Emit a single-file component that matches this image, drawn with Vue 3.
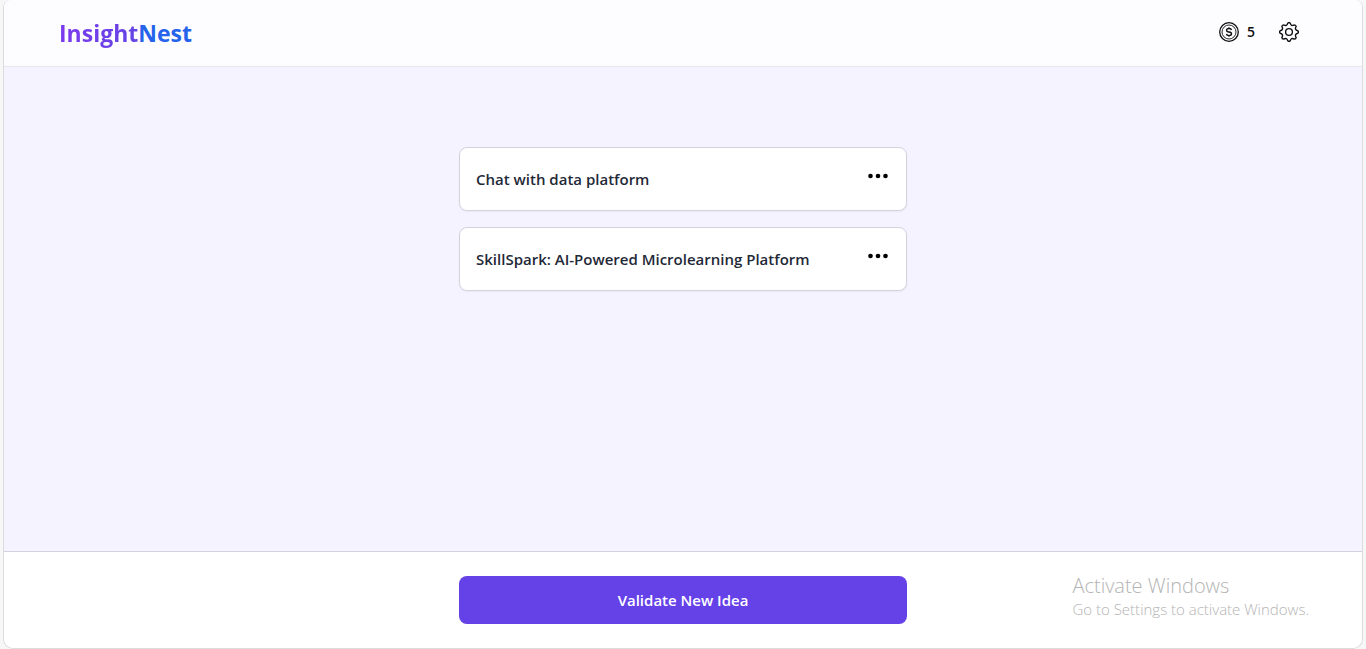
<script setup>
const ideas = [
  { id: 1, title: 'Chat with data platform' },
  { id: 2, title: 'SkillSpark: AI-Powered Microlearning Platform' },
]
const credits = 5
</script>

<template>
  <div class="page">
    <div class="panel">
      <header class="header">
        <a class="brand" href="#"><span class="brand-first">Insight</span><span class="brand-second">Nest</span></a>
        <div class="actions">
          <div class="credits">
            <svg width="20" height="20" viewBox="0 0 20 20" fill="none" stroke="#111" aria-hidden="true">
              <circle cx="10" cy="10" r="9.3" stroke-width="1.3" />
              <circle cx="10" cy="10" r="7" stroke-width="0.9" />
              <path d="M12.5 8C12.3 7 11.4 6.5 10 6.5S7.6 7.1 7.6 8.2 8.6 9.8 10 10s2.5.6 2.5 1.8-1.1 1.8-2.5 1.8S7.6 13 7.4 12M10 5.3v1.2M10 13.6v1.2" stroke-width="1.4" />
            </svg>
            <span>{{ credits }}</span>
          </div>
          <button class="icon-button" type="button" aria-label="Settings">
            <svg width="20" height="20" viewBox="0 0 20 20" fill="none" stroke="#111" stroke-width="1.4" stroke-linejoin="round" aria-hidden="true">
              <path d="M8.76 1.19Q10 0 11.24 1.19Q12.14 4.83 15.36 2.89Q17.07 2.93 17.11 4.64Q15.17 7.86 18.81 8.76Q20 10 18.81 11.24Q15.17 12.14 17.11 15.36Q17.07 17.07 15.36 17.11Q12.14 15.17 11.24 18.81Q10 20 8.76 18.81Q7.86 15.17 4.64 17.11Q2.93 17.07 2.89 15.36Q4.83 12.14 1.19 11.24Q0 10 1.19 8.76Q4.83 7.86 2.89 4.64Q2.93 2.93 4.64 2.89Q7.86 4.83 8.76 1.19Z" />
              <circle cx="10" cy="10" r="3.4" />
            </svg>
          </button>
        </div>
      </header>

      <main class="content">
        <ul class="ideas">
          <li v-for="idea in ideas" :key="idea.id" class="idea">
            <span class="idea-title">{{ idea.title }}</span>
            <button class="icon-button more" type="button" :aria-label="`Options for ${idea.title}`">
              <svg width="20" height="20" viewBox="0 0 20 20" fill="#000" aria-hidden="true">
                <circle cx="2.5" cy="10" r="2.3" />
                <circle cx="10" cy="10" r="2.3" />
                <circle cx="17.5" cy="10" r="2.3" />
              </svg>
            </button>
          </li>
        </ul>
      </main>

      <footer class="footer">
        <button class="validate" type="button">Validate New Idea</button>
      </footer>
    </div>

    <aside class="watermark">
      <p class="watermark-title">Activate Windows</p>
      <p class="watermark-text">Go to Settings to activate Windows.</p>
    </aside>
  </div>
</template>

<style>
body {
  margin: 0;
  background: #f7f7f7;
}
</style>

<style scoped>
* {
  box-sizing: border-box;
}

.page {
  height: 100vh;
  padding: 0 3px;
  font-family: "Segoe UI", "Open Sans", "Noto Sans", sans-serif;
}

.panel {
  display: flex;
  flex-direction: column;
  height: 100%;
  border: 1px solid #dcdcdf;
  border-top: 0;
  border-radius: 8px 8px 10px 10px;
  overflow: hidden;
  background: #f5f3ff;
}

.header {
  display: flex;
  align-items: center;
  justify-content: space-between;
  height: 67px;
  padding: 0 63px 2px 55px;
  border-bottom: 1px solid #e5e7eb;
  background: #fdfdff;
}

.brand {
  padding-top: 2px;
  font-size: 23px;
  line-height: 32px;
  font-weight: 700;
  text-decoration: none;
}

.brand-first {
  background: linear-gradient(to right, #7c3aed, #6344e5);
  background-clip: text;
  color: transparent;
}

.brand-second {
  color: #2563eb;
}

.actions {
  display: flex;
  align-items: center;
  gap: 24px;
}

.credits {
  display: flex;
  align-items: center;
  gap: 8px;
  font-size: 14px;
  line-height: 20px;
  font-weight: 600;
  color: #111;
}

.icon-button {
  display: flex;
  padding: 0;
  border: 0;
  background: none;
  cursor: pointer;
}

.content {
  flex: 1;
  padding: 80px 16px;
}

.ideas {
  display: flex;
  flex-direction: column;
  gap: 16px;
  max-width: 448px;
  margin: 0 auto;
  padding: 0;
  list-style: none;
}

.idea {
  display: flex;
  align-items: center;
  justify-content: space-between;
  height: 64px;
  padding: 0 18px 0 16px;
  border: 1px solid #d1d5db;
  border-radius: 8px;
  background: #fff;
  box-shadow: 0 1px 2px rgba(0, 0, 0, 0.05);
}

.idea-title {
  font-size: 15px;
  line-height: 24px;
  font-weight: 600;
  color: #1f2937;
}

.more {
  padding-bottom: 6px;
}

.footer {
  padding: 24px 16px;
  border-top: 1px solid #d1d5db;
  background: #fff;
}

.validate {
  display: block;
  width: 100%;
  max-width: 448px;
  height: 48px;
  margin: 0 auto;
  border: 0;
  border-radius: 8px;
  background: #6541e8;
  color: #fff;
  font: inherit;
  font-size: 15px;
  font-weight: 600;
  cursor: pointer;
}

.watermark {
  position: absolute;
  right: 57px;
  bottom: 30px;
  color: #b4b4b4;
  font-weight: 300;
  pointer-events: none;
}

.watermark p {
  margin: 0;
}

.watermark-title {
  font-size: 20px;
  line-height: 26px;
}

.watermark-text {
  font-size: 15px;
  line-height: 20px;
}
</style>
